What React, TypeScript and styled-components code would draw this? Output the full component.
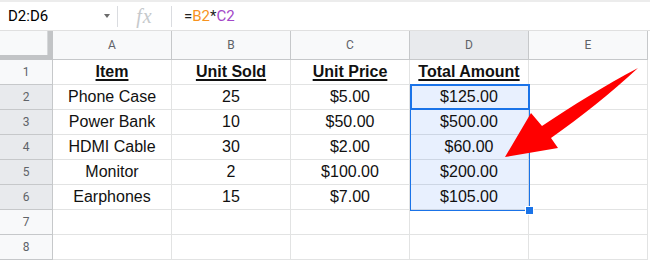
import React from 'react'
import styled, { createGlobalStyle } from 'styled-components'

const GlobalStyle = createGlobalStyle`
  html,
  body {
    margin: 0;
    padding: 0;
    background: #fff;
  }

  body {
    font-family: Roboto, 'Liberation Sans', Arial, sans-serif;
  }
`

const COLUMNS = ['A', 'B', 'C', 'D', 'E']
const ACTIVE_COL = 3
const ACTIVE_ROWS = [2, 3, 4, 5, 6]

const rows: string[][] = [
  ['Item', 'Unit Sold', 'Unit Price', 'Total Amount'],
  ['Phone Case', '25', '$5.00', '$125.00'],
  ['Power Bank', '10', '$50.00', '$500.00'],
  ['HDMI Cable', '30', '$2.00', '$60.00'],
  ['Monitor', '2', '$100.00', '$200.00'],
  ['Earphones', '15', '$7.00', '$105.00'],
  [],
  [],
]

interface ActiveProps {
  $active?: boolean
}

interface CellProps {
  $selected?: boolean
  $heading?: boolean
}

const Page = styled.div`
  position: relative;
  width: 650px;
  height: 261px;
  overflow: hidden;
  background: #fff;
`

const FormulaBar = styled.div`
  box-sizing: border-box;
  height: 31px;
  display: flex;
  align-items: center;
  border-top: 2px solid #ececec;
  border-bottom: 1px solid #e0e0e0;
`

const NameBox = styled.div`
  box-sizing: border-box;
  width: 117px;
  padding: 0 7px 0 8px;
  display: flex;
  align-items: center;
  justify-content: space-between;
  font-size: 15px;
  color: #000;
`

const Caret = styled.span`
  width: 0;
  height: 0;
  border-left: 3.5px solid transparent;
  border-right: 3.5px solid transparent;
  border-top: 4px solid #6b6b6b;
`

const Divider = styled.div`
  width: 1px;
  height: 21px;
  background: #dadce0;
`

const FxIcon = styled.div`
  width: 53px;
  text-align: center;
  font-family: 'Liberation Serif', 'DejaVu Serif', serif;
  font-style: italic;
  font-size: 20px;
  color: #c6c9cc;
  letter-spacing: 1px;
`

const Formula = styled.div`
  padding-left: 12px;
  font-size: 15px;
  color: #222;
`

const Ref = styled.span<{ $color: string }>`
  color: ${({ $color }) => $color};
`

const Sheet = styled.div`
  display: flex;
  flex-direction: column;
`

const Row = styled.div`
  display: flex;
`

const Corner = styled.div`
  box-sizing: border-box;
  width: 53px;
  height: 29px;
  background: #f8f9fa;
  border-right: 5px solid #c2c4c6;
  border-bottom: 5px solid #c2c4c6;
  box-shadow: inset -1px 0 0 #d6d8da;
`

const ColHeader = styled.div<ActiveProps>`
  box-sizing: border-box;
  width: 119px;
  height: 29px;
  display: flex;
  align-items: center;
  justify-content: center;
  font-size: 12px;
  color: #5f6368;
  background: ${({ $active }) => ($active ? '#e8eaed' : '#f8f9fa')};
  border-right: 1px solid #c6c8ca;
  border-bottom: 1px solid #c6c8ca;
`

const RowHeader = styled.div<ActiveProps>`
  box-sizing: border-box;
  width: 53px;
  height: 25px;
  display: flex;
  align-items: center;
  justify-content: center;
  font-size: 12px;
  color: #5f6368;
  background: ${({ $active }) => ($active ? '#e8eaed' : '#f8f9fa')};
  border-right: 1px solid #c6c8ca;
  border-bottom: 1px solid #c6c8ca;
`

const Cell = styled.div<CellProps>`
  box-sizing: border-box;
  width: 119px;
  height: 25px;
  display: flex;
  align-items: center;
  justify-content: center;
  font-family: 'Liberation Sans', Arial, sans-serif;
  font-size: 16px;
  color: #111;
  white-space: nowrap;
  background: ${({ $selected }) => ($selected ? '#e8f0fe' : '#fff')};
  border-right: 1px solid ${({ $selected }) => ($selected ? '#cdd6e4' : '#e2e3e3')};
  border-bottom: 1px solid ${({ $selected }) => ($selected ? '#cdd6e4' : '#e2e3e3')};
  font-weight: ${({ $heading }) => ($heading ? 700 : 400)};
  text-decoration: ${({ $heading }) => ($heading ? 'underline' : 'none')};
  text-decoration-thickness: 2px;
  text-underline-offset: 2px;
`

// selection outline sits over the cells of D2:D6
const RangeOutline = styled.div`
  position: absolute;
  left: 410px;
  top: 84px;
  width: 120px;
  height: 127px;
  box-sizing: border-box;
  border: 1px solid #1a73e8;
  pointer-events: none;
`

const ActiveOutline = styled.div`
  position: absolute;
  left: 410px;
  top: 84px;
  width: 120px;
  height: 26px;
  box-sizing: border-box;
  border: 2px solid #1a73e8;
  pointer-events: none;
`

const FillHandle = styled.div`
  position: absolute;
  left: 525px;
  top: 206px;
  width: 7px;
  height: 7px;
  background: #1a73e8;
  border: 1px solid #fff;
`

const ArrowLayer = styled.svg`
  position: absolute;
  left: 0;
  top: 0;
  pointer-events: none;
`

const App: React.FC = () => {
  return (
    <Page>
      <GlobalStyle />
      <FormulaBar>
        <NameBox>
          D2:D6
          <Caret />
        </NameBox>
        <Divider />
        <FxIcon>fx</FxIcon>
        <Divider />
        <Formula>
          =<Ref $color="#f7931e">B2</Ref>*<Ref $color="#a347c8">C2</Ref>
        </Formula>
      </FormulaBar>

      <Sheet>
        <Row>
          <Corner />
          {COLUMNS.map((c, i) => (
            <ColHeader key={c} $active={i === ACTIVE_COL}>
              {c}
            </ColHeader>
          ))}
        </Row>
        {rows.map((values, r) => {
          const rowNum = r + 1
          const inRange = ACTIVE_ROWS.includes(rowNum)
          return (
            <Row key={rowNum}>
              <RowHeader $active={inRange}>{rowNum}</RowHeader>
              {COLUMNS.map((c, i) => (
                <Cell key={c} $selected={inRange && i === ACTIVE_COL} $heading={rowNum === 1}>
                  {values[i] ?? ''}
                </Cell>
              ))}
            </Row>
          )
        })}
      </Sheet>

      <RangeOutline />
      <ActiveOutline />
      <FillHandle />

      <ArrowLayer width="650" height="261" viewBox="0 0 650 261">
        <path
          d="M 505 157 L 531 113 L 542 126 C 572 106 604 86 638 68 C 610 94 582 116 551 138 L 558 148 Z"
          fill="#ff0000"
        />
      </ArrowLayer>
    </Page>
  )
}

export default App
